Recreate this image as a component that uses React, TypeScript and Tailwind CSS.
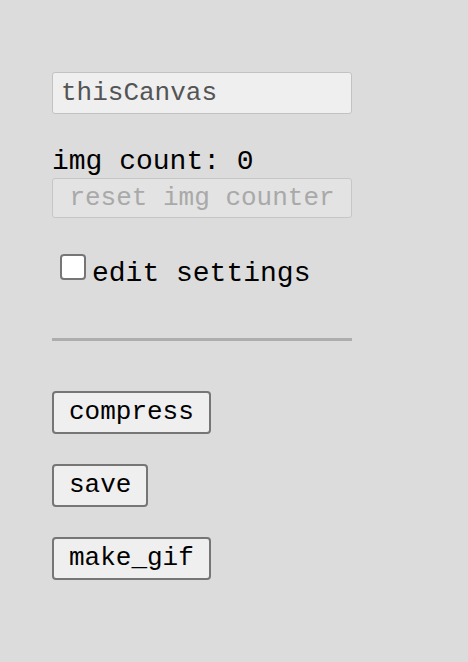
export default function App() {
  return (
    <div className="min-h-[662px] bg-[#dcdcdc] pl-[52px] pt-[72px] font-['Liberation_Mono',monospace] text-black">
      <input
        type="text"
        defaultValue="thisCanvas"
        className="block h-[42px] w-[300px] rounded-[3px] border border-[#c2c2c2] bg-[#efefef] px-[8px] text-[26px] text-[#545454] outline-none"
      />

      <div className="mt-[32px] text-[28px] leading-[32px]">img count: 0</div>
      <button
        disabled
        className="block h-[40px] w-[300px] rounded-[3px] border border-[#c6c6c6] bg-[#e3e3e3] text-[26px] text-[#a9a9a9]"
      >
        reset img counter
      </button>

      <label className="mt-[37px] flex items-start text-[28px] leading-[32px]">
        <input
          type="checkbox"
          className="ml-[8px] mr-[6px] mt-[-1px] h-[26px] w-[26px] appearance-none rounded-[4px] border-2 border-[#767676] bg-white"
        />
        <span className="pt-[3px]">edit settings</span>
      </label>

      <hr className="mt-[48px] w-[300px] border-t-[3px] border-[#adadad]" />

      <div className="mt-[50px] flex flex-col items-start gap-[30px]">
        {["compress", "save", "make_gif"].map((label) => (
          <button
            key={label}
            className="h-[43px] rounded-[4px] border-2 border-[#767676] bg-[#efefef] px-[15px] text-[26px]"
          >
            {label}
          </button>
        ))}
      </div>
    </div>
  );
}
